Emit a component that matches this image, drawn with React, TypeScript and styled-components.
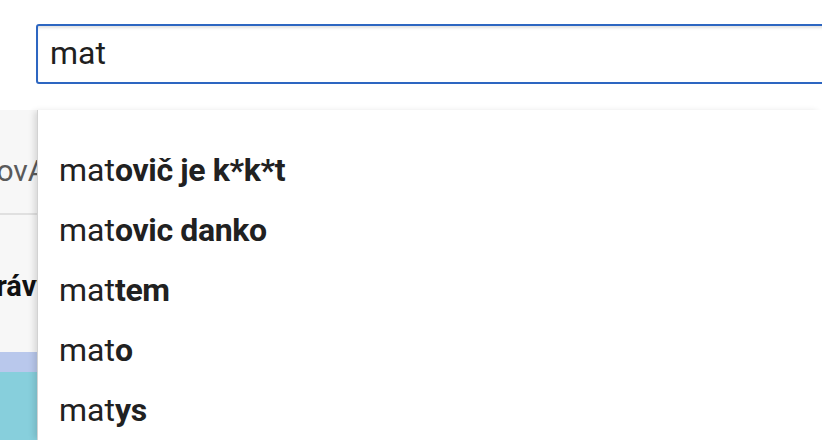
import * as React from "react";
import styled, {createGlobalStyle} from "styled-components";

const GlobalStyle = createGlobalStyle`
  html, body {
    margin: 0;
    padding: 0;
    background: #ffffff;
    font-family: Roboto, "Noto Sans", Arial, sans-serif;
  }
`;

const Page = styled.div`
  width: 822px;
  height: 440px;
  overflow: hidden;
  display: flex;
  flex-direction: column;
  background: #ffffff;
`;

const Header = styled.div`
  height: 110px;
  padding: 24px 0 0 36px;
  box-sizing: border-box;
  overflow: hidden;
`;

const SearchBox = styled.div`
  width: 820px;
  height: 60px;
  box-sizing: border-box;
  border: 2px solid #2d66c1;
  border-radius: 3px;
  box-shadow: inset 0 3px 3px -1px rgba(0, 0, 0, 0.12);
  display: flex;
  align-items: center;
  padding: 0 0 2px 12px;
  font-size: 32px;
  color: #1f1f1f;
`;

const Body = styled.div`
  flex: 1;
  display: flex;
  min-height: 0;
`;

const Behind = styled.div`
  width: 37px;
  flex-shrink: 0;
  background: #f7f7f7;
  overflow: hidden;
  display: flex;
  flex-direction: column;
`;

const TabRow = styled.div`
  height: 105px;
  padding-top: 43px;
  box-sizing: border-box;
  border-bottom: 2px solid #e0e0e0;
  white-space: nowrap;
  font-size: 30px;
  color: #5a5a5a;
`;

const Section = styled.div`
  height: 137px;
  padding-top: 4px;
  box-sizing: border-box;
  display: flex;
  align-items: center;
  white-space: nowrap;
  font-size: 29px;
  font-weight: 700;
  color: #111;
`;

const Clipped = styled.span<{$shift: number}>`
  margin-left: ${p => p.$shift}px;
`;

const Band = styled.div<{$color: string; $height?: number}>`
  background: ${p => p.$color};
  height: ${p => (p.$height ? `${p.$height}px` : "auto")};
  flex: ${p => (p.$height ? "none" : 1)};
`;

const Dropdown = styled.ul`
  position: relative;
  z-index: 1;
  flex: 1;
  margin: 0;
  padding: 30px 0 0 0;
  list-style: none;
  background: #ffffff;
  border-left: 1px solid #d2d2d2;
  box-shadow: -4px 0 6px -1px rgba(0, 0, 0, 0.12);
`;

const Suggestion = styled.li`
  height: 60px;
  display: flex;
  align-items: center;
  padding-left: 21px;
  font-size: 32px;
  color: #212121;
  white-space: nowrap;
`;

const Completion = styled.b`
  font-weight: 700;
  letter-spacing: -0.35px;
`;

const query = "mat";
const suggestions = [
  "matovič je k*k*t",
  "matovic danko",
  "mattem",
  "mato",
  "matys",
];

const App = () => {
  return (
    <Page>
      <GlobalStyle />
      <Header>
        <SearchBox>{query}</SearchBox>
      </Header>
      <Body>
        <Behind>
          <TabRow>
            <Clipped $shift={-25}>NovA</Clipped>
          </TabRow>
          <Section>
            <Clipped $shift={-38}>Správy</Clipped>
          </Section>
          <Band $color="#b9c8ec" $height={20} />
          <Band $color="#87cfdc" />
        </Behind>
        <Dropdown>
          {suggestions.map(s => (
            <Suggestion key={s}>
              {s.slice(0, query.length)}
              <Completion>{s.slice(query.length)}</Completion>
            </Suggestion>
          ))}
        </Dropdown>
      </Body>
    </Page>
  );
};

export default App;
